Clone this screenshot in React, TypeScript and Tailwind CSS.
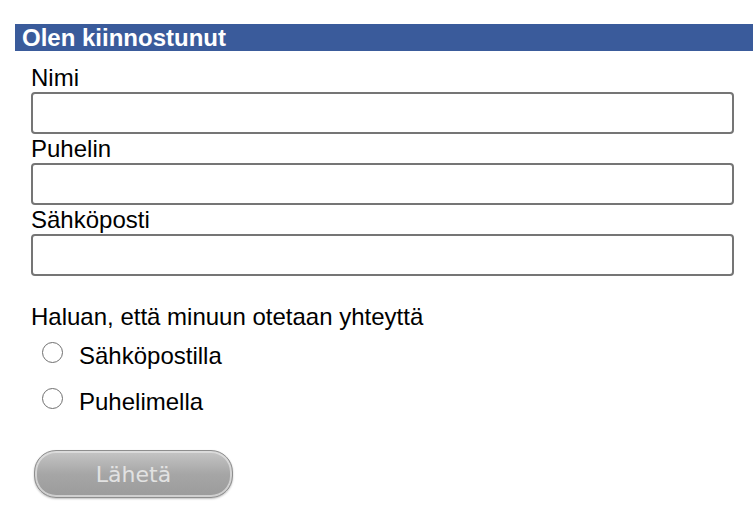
import { useState } from "react";

const fields = ["Nimi", "Puhelin", "Sähköposti"];
const options = ["Sähköpostilla", "Puhelimella"];

export default function App() {
  const [values, setValues] = useState<Record<string, string>>({});
  const [contact, setContact] = useState<string | null>(null);

  return (
    <div className="min-h-screen bg-white pt-[24px] text-black" style={{ fontFamily: "'Liberation Sans', Arial, sans-serif" }}>
      <div className="ml-[15px] h-[27px] bg-[#3a5b9b] pl-[7px] text-[24px] font-bold leading-[27px] text-white">Olen kiinnostunut</div>
      <form className="pl-[31px] pr-[19px] pt-[12px]" onSubmit={(e) => e.preventDefault()}>
        {fields.map((label) => (
          <label key={label} className="block">
            <span className="block text-[24px] leading-[29px]">{label}</span>
            <input
              className="block h-[42px] w-full rounded-[4px] border-2 border-[#757575] bg-white px-2 text-[20px] outline-none"
              value={values[label] ?? ""}
              onChange={(e) => setValues({ ...values, [label]: e.target.value })}
            />
          </label>
        ))}
        <p className="mt-[26px] text-[24px] leading-[29px]">Haluan, että minuun otetaan yhteyttä</p>
        {options.map((option) => (
          <label key={option} className="flex h-[46px] cursor-pointer items-start pl-[11px] pt-[11px]">
            <span className="flex h-[21px] w-[21px] shrink-0 items-center justify-center rounded-full border-[1.5px] border-[#6f6f6f] bg-white">
              {contact === option ? <span className="h-[11px] w-[11px] rounded-full bg-[#3a5b9b]" /> : null}
            </span>
            <input className="hidden" type="radio" name="contact" checked={contact === option} onChange={() => setContact(option)} />
            <span className="ml-[16px] text-[24px] leading-[28px]">{option}</span>
          </label>
        ))}
        <button
          type="submit"
          className="ml-[3px] mt-[27px] h-[48px] w-[199px] rounded-[22px] border border-[#8e8e8e] bg-gradient-to-b from-[#c6c6c6] via-[#a6a6a6] to-[#9b9b9b] text-[22px] text-[#e2e2e2] shadow-[inset_0_0_0_2px_rgba(230,230,230,0.7),0_1px_2px_rgba(0,0,0,0.25)]"
          style={{ fontFamily: "'DejaVu Sans', Verdana, sans-serif" }}
        >
          Lähetä
        </button>
      </form>
    </div>
  );
}
